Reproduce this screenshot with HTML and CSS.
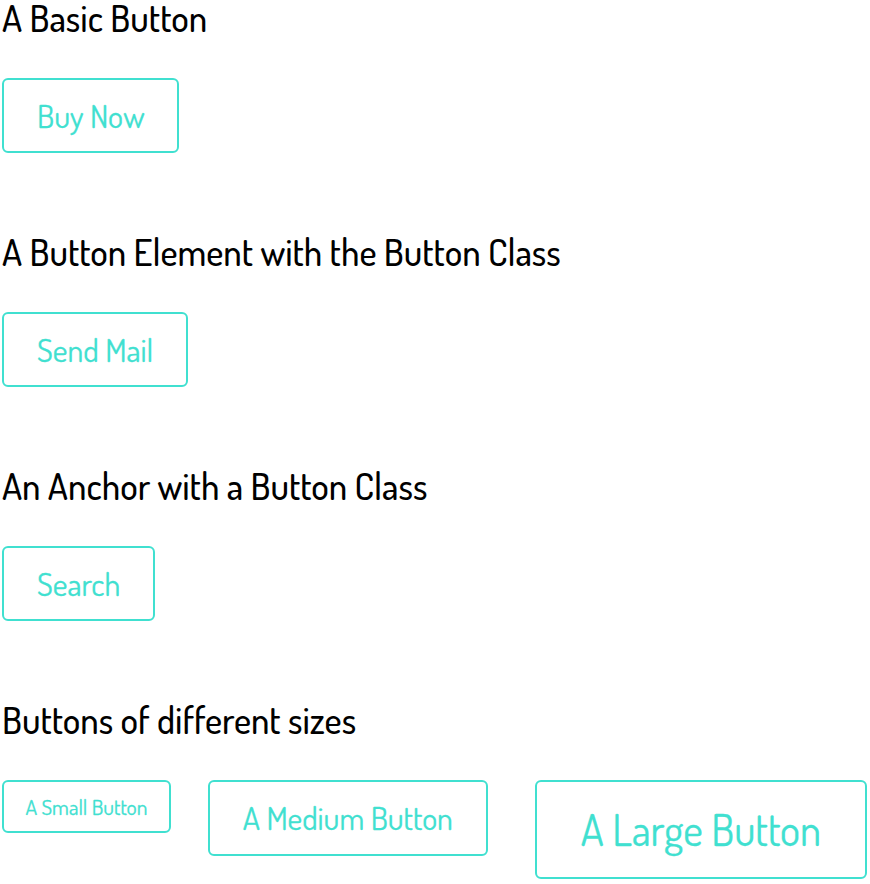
FILE: index.html
```html
<!DOCTYPE html>
<html lang="en">
<head>
<meta charset="utf-8">
<title>Buttons</title>
<link rel="stylesheet" href="styles.css">
</head>
<body>
<main class="page">
  <section class="demo">
    <h2 class="demo-title">A Basic Button</h2>
    <div class="demo-row">
      <span class="button">Buy Now</span>
    </div>
  </section>
  <section class="demo">
    <h2 class="demo-title">A Button Element with the Button Class</h2>
    <div class="demo-row">
      <button class="button" type="button">Send Mail</button>
    </div>
  </section>
  <section class="demo">
    <h2 class="demo-title">An Anchor with a Button Class</h2>
    <div class="demo-row">
      <a class="button" href="#">Search</a>
    </div>
  </section>
  <section class="demo demo-last">
    <h2 class="demo-title">Buttons of different sizes</h2>
    <div class="demo-row sizes">
      <span class="button button-small">A Small Button</span>
      <span class="button button-medium">A Medium Button</span>
      <span class="button button-large">A Large Button</span>
    </div>
  </section>
</main>
</body>
</html>
```

FILE: styles.css
```css
html, body {
  margin: 0;
  padding: 0;
  background: #ffffff;
}

body {
  font-family: "Dosis", "Open Sans", sans-serif;
  color: #000000;
}

.page {
  padding-left: 2px;
}

.demo {
  height: 234px;
}

.demo-last {
  height: auto;
}

.demo-title {
  margin: 0;
  font-size: 36.7px;
  line-height: 36px;
  font-weight: 500;
  color: #000000;
}

.demo-row {
  margin-top: 42px;
  display: flex;
  align-items: flex-start;
}

.button {
  box-sizing: border-box;
  display: inline-block;
  font-family: inherit;
  font-size: 32px;
  line-height: 35px;
  font-weight: 400;
  color: #40e0d0;
  background: #ffffff;
  border: 2px solid #40e0d0;
  border-radius: 6px;
  padding: 18px 33px;
  text-decoration: none;
  white-space: nowrap;
  margin: 0;
  cursor: pointer;
  -webkit-text-stroke: 0.3px #40e0d0;
}

.button-small {
  font-size: 21.6px;
  line-height: 25px;
  padding: 12px 21.5px;
  margin-right: 37px;
}

.button-medium {
  font-size: 31.9px;
  line-height: 36px;
  padding: 18px 33px;
  margin-right: 47px;
}

.button-large {
  font-size: 42.6px;
  line-height: 47px;
  padding: 24px 44px;
}
```
